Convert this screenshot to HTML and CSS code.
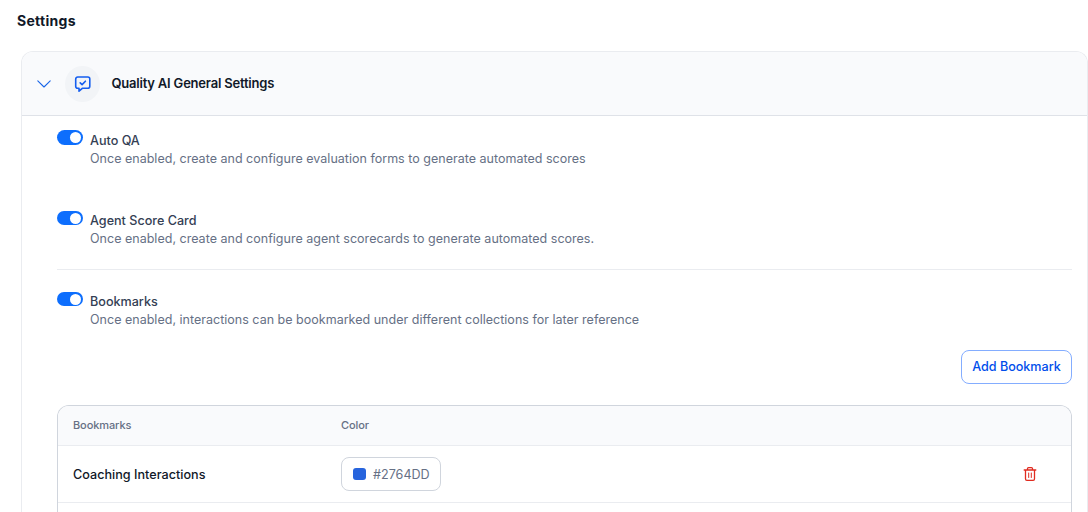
FILE: index.html
```html
<!DOCTYPE html>
<html lang="en">
<head>
<meta charset="utf-8">
<title>Settings</title>
<link rel="stylesheet" href="styles.css">
</head>
<body>
<main class="page">
  <h1 class="page-title">Settings</h1>
  <section class="card">
    <header class="card-header">
      <svg class="chevron" width="14" height="8" viewBox="0 0 14 8" fill="none" stroke="#1a66e8" stroke-width="1.1" stroke-linecap="round" stroke-linejoin="round"><path d="M.8.8 7 7 13.2.8"/></svg>
      <span class="header-icon">
        <svg width="18" height="18" viewBox="0 0 18 18" fill="none" stroke="#155eef" stroke-width="1.6" stroke-linecap="round" stroke-linejoin="round"><path d="M3.7 2h10.1a2 2 0 0 1 2 2v7.3a2 2 0 0 1-2 2H8.3L5 16.2v-2.9H3.7a2 2 0 0 1-2-2V4a2 2 0 0 1 2-2Z"/><path d="m6.2 7.8 1.9 1.8 3.3-3.4"/></svg>
      </span>
      <h2 class="card-title">Quality AI General Settings</h2>
    </header>
    <div class="card-body">
      <div class="setting">
        <span class="toggle"></span>
        <div class="setting-text"><h3>Auto QA</h3><p>Once enabled, create and configure evaluation forms to generate automated scores</p></div>
      </div>
      <div class="setting setting-agent">
        <span class="toggle"></span>
        <div class="setting-text"><h3>Agent Score Card</h3><p>Once enabled, create and configure agent scorecards to generate automated scores.</p></div>
      </div>
      <div class="setting setting-bookmarks">
        <span class="toggle"></span>
        <div class="setting-text"><h3>Bookmarks</h3><p>Once enabled, interactions can be bookmarked under different collections for later reference</p></div>
      </div>
      <div class="actions"><button class="add-button" type="button">Add Bookmark</button></div>
      <div class="table">
        <div class="row row-head"><span>Bookmarks</span><span>Color</span><span></span></div>
        <div class="row">
          <span class="name">Coaching Interactions</span>
          <span class="color-chip"><i class="swatch"></i><span>#2764DD</span></span>
          <svg width="14" height="16" viewBox="0 0 14 16" fill="none" stroke="#e02b20" stroke-width="1.3" stroke-linecap="round" stroke-linejoin="round"><path d="M1.2 4h11.6M4.5 3.8V2.6q0-1 1-1h3q1 0 1 1v1.2M2.5 4v9q0 1.4 1.4 1.4h6.2q1.4 0 1.4-1.4V4"/><path stroke-width="1" d="M5.7 7v4.5M8.3 7v4.5"/></svg>
        </div>
      </div>
    </div>
  </section>
</main>
</body>
</html>
```
FILE: styles.css
```css
* { box-sizing: border-box; }
html, body { margin: 0; height: 100%; overflow: hidden; }
body { background: #fff; font-family: Inter, "Liberation Sans", sans-serif; font-size: 12.6px; color: #101828; }
h1, h2, h3, p { margin: 0; }
.page { display: flex; flex-direction: column; height: 100vh; padding: 11px 0 0 17px; }
.page-title { flex: none; height: 20px; font-size: 14px; line-height: 20px; font-weight: 700; letter-spacing: 0.3px; }
.card { display: flex; flex: 1; flex-direction: column; min-height: 0; margin: 20px 0 0 4px; border: 1px solid #eaecf0; border-bottom: 0; border-radius: 12px 12px 0 0; overflow: hidden; }
.card-header { display: flex; flex: none; align-items: center; height: 64px; padding-left: 15px; background: #f9fafc; border-bottom: 1px solid #dfe2e8; }
.chevron { flex: none; }
.header-icon { display: flex; align-items: center; justify-content: center; width: 35px; height: 36px; margin-left: 14px; border-radius: 50%; background: #f2f4f7; }
.card-title { margin: -1px 0 0 11.4px; font-size: 13px; line-height: 20px; font-weight: 600; letter-spacing: -0.2px; }
.card-body { display: flex; flex: 1; flex-direction: column; min-height: 0; padding: 14px 15px 0 35px; }
.setting { display: flex; flex: none; height: 80px; }
.toggle { flex: none; width: 26px; height: 15px; border-radius: 8px; background: #0d6efd; padding: 2px 2px 0 13px; }
.toggle::before { content: ""; display: block; width: 11px; height: 11px; border-radius: 50%; background: #fff; }
.setting-agent .toggle, .setting-bookmarks .toggle { height: 14px; padding-top: 1.5px; }
.setting-text { margin-left: 7px; padding-top: 2px; }
.setting h3 { font-size: 12.6px; line-height: 18px; font-weight: 450; color: #344054; }
.setting p { font-size: 12.5px; line-height: 18px; letter-spacing: 0.015px; color: #667085; white-space: nowrap; }
.setting-agent { height: 60px; padding-top: 1px; border-bottom: 1px solid #eaecf0; }
.setting-agent .setting-text { padding-top: 1px; }
.setting-bookmarks { height: 80px; padding-top: 22px; }
.setting-bookmarks .setting-text { padding-top: 1px; }
.actions { display: flex; flex: none; justify-content: flex-end; }
.add-button { width: 111px; height: 34px; padding: 0 0 1px; border: 1px solid #84adff; border-radius: 8px; background: #fff; color: #004eeb; font: 550 12.6px/18px Inter, sans-serif; letter-spacing: -0.03px; white-space: nowrap; }
.table { flex: 1; min-height: 0; margin-top: 21px; border: 1px solid #d0d5dd; border-bottom: 0; border-radius: 12px 12px 0 0; overflow: hidden; }
.row { display: grid; grid-template-columns: 268px 1fr 14px; align-items: center; height: 57px; padding: 0 34px 0 15px; border-bottom: 1px solid #eaecf0; }
.row-head { height: 40px; padding-bottom: 1px; background: #f9fafc; font-size: 11px; font-weight: 450; letter-spacing: -0.1px; color: #667085; }
.name { font-size: 12.6px; font-weight: 450; letter-spacing: 0.02px; }
.color-chip { display: flex; align-items: center; width: 100px; height: 34px; padding-left: 11px; border: 1px solid #d0d5dd; border-radius: 8px; color: #667085; }
.swatch { width: 13px; height: 12px; margin-right: 7px; border-radius: 3px; background: #2764dd; }
```
